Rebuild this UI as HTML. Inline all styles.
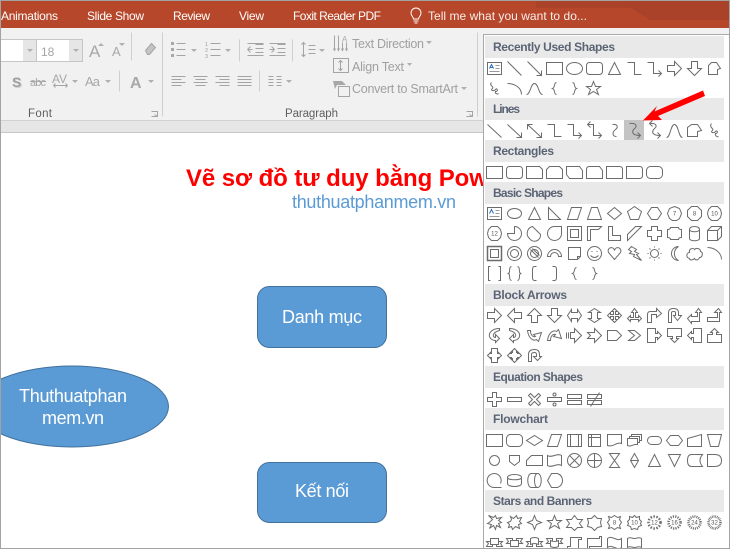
<!DOCTYPE html>
<html><head><meta charset="utf-8"><title>PowerPoint shapes</title>
<style>
html,body{margin:0;padding:0;background:#fff;width:730px;height:549px;overflow:hidden}
svg{display:block}
text{font-family:"Liberation Sans",sans-serif}
.t{fill:#fff;font-size:12px}
.r{fill:#a0a0a0;font-size:12.500px}
.l{fill:#5f5f5f;font-size:11.500px}
.h{fill:#5b6475;font-size:12px;font-weight:bold}
.w{fill:#fff;font-size:18px}
.i path,.i rect,.i circle,.i ellipse,.i line{fill:none;stroke:#a4a4a4;stroke-width:1}
.c{fill:#b0b0b0}
.s path,.s rect,.s circle,.s ellipse{fill:none;stroke:#6c6c6c;stroke-width:1}
.s text{font-size:6px;fill:#555;text-anchor:middle}
</style></head><body>
<svg width="730" height="549" viewBox="0 0 730 549" xmlns="http://www.w3.org/2000/svg">
<rect width="730" height="549" fill="#fff"/>
<!-- canvas -->
<text x="186" y="186" font-size="24" font-weight="bold" fill="#f00" textLength="384" lengthAdjust="spacing">Vẽ sơ đồ tư duy bằng PowerPoint</text>
<text x="292" y="208" font-size="18" fill="#5b9bd5" textLength="164">thuthuatphanmem.vn</text>
<rect x="257.500" y="286.500" width="129" height="61" rx="12" fill="#5b9bd5" stroke="#41719c"/>
<rect x="257.500" y="462.500" width="129" height="60" rx="12" fill="#5b9bd5" stroke="#41719c"/>
<ellipse cx="72" cy="406.500" rx="96.500" ry="40.500" fill="#5b9bd5" stroke="#41719c"/>
<text class="w" x="282" y="323" textLength="80">Danh mục</text>
<text class="w" x="295" y="497" textLength="54">Kết nối</text>
<text class="w" x="19" y="402" textLength="108">Thuthuatphan</text>
<text class="w" x="42" y="424" textLength="62">mem.vn</text>
<!-- ribbon -->
<rect y="0" width="730" height="28" fill="#b7472a"/>
<path d="M536 1H730V8H536Z" fill="#ab432a"/>
<path d="M620 1H730V20H650Z" fill="#a94229"/>
<rect y="0" width="730" height="1" fill="#a3a3a3"/>
<rect y="28" width="730" height="93" fill="#f1f1f1"/>
<rect y="120" width="730" height="1" fill="#d2d2d2"/>
<rect y="121" width="730" height="11" fill="#e6e6e6"/>
<rect y="132" width="730" height="1" fill="#c6c6c6"/>
<text class="t" x="1" y="20" textLength="57">Animations</text>
<text class="t" x="87" y="20" textLength="57">Slide Show</text>
<text class="t" x="173" y="20" textLength="37">Review</text>
<text class="t" x="239" y="20" textLength="25">View</text>
<text class="t" x="293" y="20" textLength="88">Foxit Reader PDF</text>
<text class="t" x="428" y="20" textLength="159" fill-opacity=".9">Tell me what you want to do...</text>
<path d="M413 21h5M414 23h3M413 19c0-2-2.500-3-2.500-6a5 5 0 0 1 10 0c0 3-2.500 4-2.500 6z" fill="none" stroke="#fff" transform="translate(.5 0)"/>
<!-- font boxes -->
<rect x="0" y="39.500" width="82.500" height="22" fill="#fff" stroke="#c6c6c6"/>
<rect x="23" y="40" width="13" height="21" fill="#e6e6e6"/>
<rect x="36" y="40" width="1" height="21" fill="#c6c6c6"/>
<rect x="69" y="40" width="13" height="21" fill="#e6e6e6"/>
<text x="41" y="56" font-size="12" fill="#a5a5a5">18</text>
<path class="c" d="M27 49h6l-3 3zM73 49h6l-3 3zM191 49h6l-3 3zM225 49h6l-3 3zM319 49h6l-3 3zM426 41h6l-3 3zM407 63h5l-2.500 3zM461 87h6l-3 3zM72 80h6l-3 3zM105 80h6l-3 3zM148 80h6l-3 3zM286 80h6l-3 3z"/>
<text x="89" y="57" font-size="17" fill="#a8a8a8">A</text>
<text x="112" y="56" font-size="13" fill="#a8a8a8">A</text>
<path class="c" d="M98 46h6l-3-3zM119 43h6l-3 3z"/>
<text x="13" y="88" font-size="14" font-weight="bold" fill="#d0d0d0">S</text>
<text x="12" y="87" font-size="14" font-weight="bold" fill="#a0a0a0">S</text>
<text x="30" y="86" font-size="11" fill="#a8a8a8" textLength="16">abc</text>
<rect x="30" y="81" width="16" height="1" fill="#a8a8a8"/>
<text x="52" y="83" font-size="12" fill="#a8a8a8" textLength="15">AV</text>
<text x="85" y="86" font-size="13" fill="#a8a8a8" textLength="15">Aa</text>
<text x="130" y="88" font-size="16" font-weight="bold" fill="#a8a8a8" textLength="11">A</text>
<text class="l" x="28" y="117" textLength="24">Font</text>
<text class="l" x="285" y="117" textLength="53">Paragraph</text>
<text class="r" x="352" y="48" textLength="72">Text Direction</text>
<text class="r" x="352" y="71" textLength="52">Align Text</text>
<text class="r" x="352" y="93" textLength="106">Convert to SmartArt</text>
<g fill="#a8a8a8">
<rect x="171" y="42" width="3" height="3"/><rect x="171" y="48" width="3" height="3"/><rect x="171" y="54" width="3" height="3"/>
<path d="M333 81H342L346 85H337L335 89Z"/>
</g>
<text x="205" y="46" font-size="5.500" fill="#a0a0a0">1</text>
<text x="205" y="52" font-size="5.500" fill="#a0a0a0">2</text>
<text x="205" y="58" font-size="5.500" fill="#a0a0a0">3</text>
<g transform="translate(.5 .5)" class="i">
<path d="M131 32V60M162 32V116M119 70V91M239 39V61M292 39V61M259 70V91M477 32V116" style="stroke:#cfcfcf"/>
<path d="M53 85H67M53 85l2-2M53 85l2 2M67 85l-2-2M67 85l-2 2"/>
<path d="M145 50l6-7 4 4-6 7h-2z" style="fill:#c4c4c4"/>
<path d="M151 111h6v5h-6M154 114l3 2"/>
<path d="M466 111h6v5h-6M469 114l3 2"/>
<path d="M176 43h9M176 49h9M176 55h9"/>
<path d="M210 43h10M210 49h10M210 55h10"/>
<path d="M171 76h14M171 79h10M171 82h14M171 85h10M193 76h14M195 79h10M193 82h14M195 85h10M215 76h14M219 79h10M215 82h14M219 85h10M237 76h14M237 79h14M237 82h14M237 85h14"/>
<path d="M268 76h5M268 79h5M268 82h5M268 85h5M276 76h5M276 79h5M276 82h5M276 85h5"/>
<path d="M247 49h5M247 49l3-3M247 49l3 3M255 44h8M255 48h8M255 52h8M247 55h16M247 43h16"/>
<path d="M269 49h5M274 49l-3-3M274 49l-3 3M277 44h8M277 48h8M277 52h8M269 55h16M269 43h16"/>
<path d="M303 42v14M301 44l2-2 2 2M301 54l2 2 2-2M308 45h7M308 49h7M308 53h7"/>
<path d="M334 35v15M338 35v15M342 42v8M346 42v8M333 48l1 2 1-2M337 48l1 2 1-2M341 48l1 2 1-2M345 48l1 2 1-2"/>
<rect x="333" y="58" width="15" height="14"/>
<path d="M340 60v10M338 62l2-2 2 2M338 68l2 2 2-2"/>
<rect x="338" y="86" width="11" height="10"/>
</g>
<text x="342" y="42" font-size="8" fill="#a8a8a8">A</text>
<!-- gallery panel -->
<rect x="483.500" y="34.500" width="246" height="514" fill="#fff" stroke="#a8a8a8"/>
<g fill="#e9e9e9">
<rect x="485" y="36" width="239" height="22"/>
<rect x="485" y="98" width="239" height="22"/>
<rect x="485" y="140" width="239" height="22"/>
<rect x="485" y="182" width="239" height="22"/>
<rect x="485" y="284" width="239" height="22"/>
<rect x="485" y="366" width="239" height="22"/>
<rect x="485" y="408" width="239" height="22"/>
<rect x="485" y="490" width="239" height="22"/>
</g>
<rect x="624" y="120" width="20" height="20" fill="#c4c4c4"/>
<text class="h" x="493" y="51" textLength="122">Recently Used Shapes</text>
<text class="h" x="493" y="113" textLength="27">Lines</text>
<text class="h" x="493" y="155" textLength="61">Rectangles</text>
<text class="h" x="493" y="197" textLength="70">Basic Shapes</text>
<text class="h" x="493" y="299" textLength="74">Block Arrows</text>
<text class="h" x="493" y="381" textLength="90">Equation Shapes</text>
<text class="h" x="493" y="423" textLength="55">Flowchart</text>
<text class="h" x="493" y="505" textLength="99">Stars and Banners</text>
<svg x="0" y="0" width="730" height="548">
<g class="s" transform="translate(.5 .5)">
<!-- recent -->
<g transform="translate(494 68)"><path d="M-7-6H7V6H-7Z"/><path d="M1-3H5M1 0H5M-5 3H5" style="stroke:#999"/><path d="M-5 0L-3-4L-1 0M-4-1H-2" style="stroke:#2a6ebb"/></g>
<path transform="translate(514 68)" d="M-7-7L7 7"/>
<path transform="translate(534 68)" d="M-7-7L7 7M7 2V7H2"/>
<rect x="546" y="62" width="16" height="12"/>
<ellipse cx="574" cy="68" rx="8" ry="6"/>
<rect x="586" y="62" width="16" height="12" rx="3"/>
<path transform="translate(614 68)" d="M0-6L6 6H-6Z"/>
<path transform="translate(634 68)" d="M-7-6H0V6H7"/>
<path transform="translate(654 68)" d="M-7-6H-1V5H7M4 2L7 5L4 8"/>
<path transform="translate(674 68)" d="M-7-3H0V-7L7 0L0 7V3H-7Z"/>
<path transform="translate(694 68)" d="M-3-7H3V0H7L0 7L-7 0H-3Z"/>
<path transform="translate(714 68)" d="M-6-3L-3-6H2L6 0L3 1V6H-6Z"/>
<path transform="translate(494 88)" d="M-3-6C-6-3 0-2-2 0C-5 2 0 3 1 1C3-1 4 3 1 3C0 5 3 6 4 5"/>
<path transform="translate(514 88)" d="M-7-5C0-5 7-1 7 6"/>
<path transform="translate(534 88)" d="M-8 6C-4 6-4-5 0-5C4-5 4 6 8 6"/>
<path transform="translate(554 88)" d="M2-6C-1-6 1-1-2 0C1 1-1 6 2 6"/>
<path transform="translate(574 88)" d="M-2-6C1-6-1-1 2 0C-1 1 1 6-2 6"/>
<path transform="translate(593 88)" d="M0-7L2-2H7L3 1L5 6L0 3L-5 6L-3 1L-7-2H-2Z"/>
<!-- lines -->
<path transform="translate(494 130)" d="M-7-6L7 7"/>
<path transform="translate(514 130)" d="M-7-6L7 7M7 2V7H2"/>
<path transform="translate(534 130)" d="M-7-6L7 7M7 2V7H2M-7-1V-6H-2"/>
<path transform="translate(554 130)" d="M-7-6H0V6H7"/>
<path transform="translate(574 130)" d="M-7-6H-1V5H7M4 2L7 5L4 8"/>
<path transform="translate(594 130)" d="M-7-6H-1V5H7M-4-9L-7-6L-4-3M4 2L7 5L4 8"/>
<path transform="translate(614 130)" d="M-2-6C3-7 4-3 1-1C-2 1-3 6 2 6"/>
<path transform="translate(634 130)" d="M-5-7C2-8 3-4 0-2C-3 1-3 5 6 5M3 2L6 5L3 8"/>
<path transform="translate(654 130)" d="M-5-7C2-8 3-4 0-2C-3 1-3 5 6 5M3 2L6 5L3 8M-2-10L-5-7L-2-4"/>
<path transform="translate(674 130)" d="M-8 7C-4 7-4-6 0-6C4-6 4 7 8 7"/>
<path transform="translate(694 130)" d="M-7 6V-3L-3-6H3L7 0L3 1V6Z"/>
<path transform="translate(714 130)" d="M-3-7C-6-3 0-2-2 0C-5 2 0 3 1 1C3-1 4 3 1 3C0 5 3 7 4 6"/>
<!-- rectangles -->
<rect x="486" y="166" width="16" height="12"/>
<rect x="506" y="166" width="16" height="12" rx="3"/>
<path d="M526 166H539L542 169V178H526Z"/>
<path d="M549 166H559L562 169V178H546V169Z"/>
<path d="M566 166H579L582 170V178H569L566 174Z"/>
<path d="M589 166H599L602 170V178H586V169Q586 166 589 166Z"/>
<path d="M606 166H619Q622 166 622 169V178H606Z"/>
<path d="M626 166H639Q642 166 642 169V175Q642 178 639 178H626Z"/>
<rect x="646" y="166" width="16" height="12" rx="4"/>
<!-- basic 1 -->
<g transform="translate(494 213)"><path d="M-7-6H7V6H-7Z"/><path d="M1-3H5M1 0H5M-5 3H5" style="stroke:#999"/><path d="M-5 0L-3-4L-1 0" style="stroke:#2a6ebb"/></g>
<ellipse cx="514" cy="213" rx="7" ry="5"/>
<path transform="translate(534 213)" d="M0-6L6 6H-6Z"/>
<path transform="translate(554 213)" d="M-6-6L6 6H-6Z"/>
<path transform="translate(574 213)" d="M-3-6H7L3 6H-7Z"/>
<path transform="translate(594 213)" d="M-3-6H3L7 6H-7Z"/>
<path transform="translate(614 213)" d="M0-6L7 0L0 6L-7 0Z"/>
<path transform="translate(634 213)" d="M0-7L7-2L4 6H-4L-7-2Z"/>
<path transform="translate(654 213)" d="M-3-6H3L7 0L3 6H-3L-7 0Z"/>
<g transform="translate(674 213)"><path d="M0-7L5-5L7 0L5 5L2 7H-2L-5 5L-7 0L-5-5Z"/><text y="2">7</text></g>
<g transform="translate(694 213)"><path d="M-3-7H3L7-3V3L3 7H-3L-7 3V-3Z"/><text y="2">8</text></g>
<g transform="translate(714 213)"><path d="M-3-7H3L6-4L7 0L6 4L3 7H-3L-6 4L-7 0L-6-4Z"/><text y="2">10</text></g>
<!-- basic 2 -->
<g transform="translate(494 233)"><path d="M-3-7H3L6-4L7 0L6 4L3 7H-3L-6 4L-7 0L-6-4Z"/><text y="2">12</text></g>
<path transform="translate(514 233)" d="M0 0V-7A7 7 0 1 1 -7 0Z"/>
<path transform="translate(534 233)" d="M-2-7L6 1A6 6 0 0 1-5 5A7 7 0 0 1-2-7Z"/>
<path transform="translate(554 233)" d="M7-7V0A7 7 0 1 1 0-7Z"/>
<g transform="translate(574 233)"><path d="M-7-7H7V7H-7Z"/><path d="M-4-4H4V4H-4Z"/></g>
<path transform="translate(594 233)" d="M-7-7H7L4-4H-4V7H-7Z"/>
<path transform="translate(614 233)" d="M-6-7H-2V2H6V7H-6Z"/>
<path transform="translate(634 233)" d="M-7 1L1-7H7L-7 7Z"/>
<path transform="translate(654 233)" d="M-3-7H3V-3H7V3H3V7H-3V3H-7V-3H-3Z"/>
<path transform="translate(674 233)" d="M-4-6H4Q4-4 7-4V4Q4 4 4 6H-4Q-4 4-7 4V-4Q-4-4-4-6Z"/>
<g transform="translate(694 233)"><path d="M-5-4V5C-5 8 5 8 5 5V-4C5-8-5-8-5-4C-5-1 5-1 5-4"/></g>
<path transform="translate(714 233)" d="M-7-3L-3-7H7V3L3 7H-7ZM-7-3H3V7M3-3L7-7"/>
<!-- basic 3 -->
<g transform="translate(494 253)"><path d="M-7-7H7V7H-7Z" style="stroke-width:1.500"/><path d="M-4-4H4V4H-4Z"/></g>
<g transform="translate(514 253)"><circle r="7"/><circle r="4"/></g>
<g transform="translate(534 253)"><circle r="7"/><circle r="4"/><path d="M-4-4L4 4M-2-5L5 2"/></g>
<path transform="translate(554 253)" d="M-7 3A7 7 0 0 1 7 3L4 3A4 4 0 0 0-4 3Z"/>
<path transform="translate(574 253)" d="M-6-6H6V3L3 6H-6ZM3 6L3 3H6"/>
<g transform="translate(594 253)"><circle r="7"/><path d="M-4 2Q0 6 4 2M-3-2h1M2-2h1"/></g>
<path transform="translate(614 253)" d="M0 6L-6-1C-8-6-1-8 0-3C1-8 8-6 6-1Z"/>
<path transform="translate(634 253)" d="M-3-7L2-4L0-2L4 0L2 1L7 7L-1 3L0 1L-5 0L-3-2L-6-4Z"/>
<g transform="translate(654 253)"><circle r="4"/><path d="M0-7V-6M0 6V7M-7 0H-6M6 0H7M-5-5L-4-4M4 4L5 5M-5 5L-4 4M4-4L5-5"/></g>
<path transform="translate(674 253)" d="M4-7A8 8 0 0 0 4 7A6 6 0 0 1 4-7Z"/>
<path transform="translate(694 253)" d="M-5 5C-9 4-8-1-5-1C-6-5-1-6 0-4C2-6 6-5 6-2C9-1 8 4 5 4C4 7 1 7 0 5C-2 7-5 7-5 5Z"/>
<path transform="translate(714 253)" d="M-7-6C0-6 7-1 7 6"/>
<!-- basic 4 -->
<path transform="translate(494 273)" d="M-4-7H-6V7H-4M4-7H6V7H4"/>
<path transform="translate(514 273)" d="M-3-7Q-5-7-5-2Q-5 0-7 0Q-5 0-5 2Q-5 7-3 7M3-7Q5-7 5-2Q5 0 7 0Q5 0 5 2Q5 7 3 7"/>
<path transform="translate(534 273)" d="M2-7H0Q-2-7-2-4V4Q-2 7 0 7H2"/>
<path transform="translate(554 273)" d="M-2-7H0Q2-7 2-4V4Q2 7 0 7H-2"/>
<path transform="translate(574 273)" d="M2-6C-1-6 1-1-2 0C1 1-1 6 2 6"/>
<path transform="translate(594 273)" d="M-2-6C1-6-1-1 2 0C-1 1 1 6-2 6"/>
<!-- block 1 -->
<path transform="translate(494 315)" d="M-7-3H0V-7L7 0L0 7V3H-7Z"/>
<path transform="translate(514 315)" d="M7-3H0V-7L-7 0L0 7V3H7Z"/>
<path transform="translate(534 315)" d="M-3 7V0H-7L0-7L7 0H3V7Z"/>
<path transform="translate(554 315)" d="M-3-7V0H-7L0 7L7 0H3V-7Z"/>
<path transform="translate(574 315)" d="M-7 0L-3-6V-3H3V-6L7 0L3 6V3H-3V6Z"/>
<path transform="translate(594 315)" d="M0-7L6-3H3V3H6L0 7L-6 3H-3V-3H-6Z"/>
<path transform="translate(614 315)" d="M0-7L3-4H1V-1H4V-3L7 0L4 3V1H1V4H3L0 7L-3 4H-1V1H-4V3L-7 0L-4-3V-1H-1V-4H-3Z"/>
<path transform="translate(634 315)" d="M0-7L3-3H1V2H4V0L7 3L4 6V4H-4V6L-7 3L-4 0V2H-1V-3H-3Z"/>
<path transform="translate(654 315)" d="M-7 7V-1Q-7-4-4-4H2V-7L7-2L2 2V-1H-3V7Z"/>
<path transform="translate(674 315)" d="M-6 7V-3Q-6-7-1-7Q4-7 4-3V0H7L3 5L-1 0H1V-3Q1-4-1-4Q-3-4-3-3V7Z"/>
<path transform="translate(694 315)" d="M-7 3L-3-1V1H3V-3H1L4-7L7-3H5V6H-3V8L-7 3Z"/>
<path transform="translate(714 315)" d="M-7 2H3V-3H0L4-7L7-3H5V6H-7Z"/>
<!-- block 2 -->
<path transform="translate(494 335)" d="M5-7C-2-7-6-3-5 1C-4 4-1 5 1 5V7L5 3L1-1V2C-2 2-3-3 5-5Z"/>
<path transform="translate(514 335)" d="M-5-7C2-7 6-3 5 1C4 4 1 5-1 5V7L-5 3L-1-1V2C2 2 3-3-5-5Z"/>
<path transform="translate(534 335)" d="M-7-5C-6 3-1 6 2 4L4 6L7-3L-1-1L1 1C-2 2-4-1-4-5Z"/>
<path transform="translate(554 335)" d="M-7 5C-6-3-1-6 2-4L4-6L7 3L-1 1L1-1C-2-2-4 1-4 5Z"/>
<path transform="translate(574 335)" d="M-8-3V3M-6-3V3M-4-3H0V-7L7 0L0 7V3H-4Z"/>
<path transform="translate(594 335)" d="M-7-3H0V-7L7 0L0 7V3H-7L-4 0Z"/>
<path transform="translate(614 335)" d="M-7-5H2L7 0L2 5H-7Z"/>
<path transform="translate(634 335)" d="M-6-5H0L6 0L0 5H-6L0 0Z"/>
<path transform="translate(654 335)" d="M-7-7H1V-2H3V-4L7 0L3 4V2H1V7H-7Z"/>
<path transform="translate(674 335)" d="M-7-7H7V1H2V3H4L0 7L-4 3H-2V1H-7Z"/>
<path transform="translate(694 335)" d="M7-7H-1V-2H-3V-4L-7 0L-3 4V2H-1V7H7Z"/>
<path transform="translate(714 335)" d="M-7 7H7V-1H2V-3H4L0-7L-4-3H-2V-1H-7Z"/>
<!-- block 3 -->
<path transform="translate(494 355)" d="M-3-7H3V-2H4V-3L7 0L4 3V2H3V7H-3V2H-4V3L-7 0L-4-3V-2H-3Z"/>
<path transform="translate(514 355)" d="M0-7L3-4H2V-3H3V-2H4V-3L7 0L4 3V2H3V3H2V4H3L0 7L-3 4H-2V3H-3V2H-4V3L-7 0L-4-3V-2H-3V-3H-2V-4H-3Z"/>
<path transform="translate(534 355)" d="M-6 6V-1Q-6-6 0-6Q5-6 5-1V1H7L3 5L-1 1H2V-1Q2-3 0-3Q-3-3-3-1V6Z"/>
<!-- equation -->
<path transform="translate(494 399)" d="M-2-7H2V-2H7V2H2V7H-2V2H-7V-2H-2Z"/>
<rect x="507" y="397" width="14" height="4"/>
<path transform="translate(534 399)" d="M-4-6L0-2L4-6L6-4L2 0L6 4L4 6L0 2L-4 6L-6 4L-2 0L-6-4Z"/>
<g transform="translate(554 399)"><rect x="-7" y="-2" width="14" height="4"/><circle cy="-5" r="1.500"/><circle cy="5" r="1.500"/></g>
<g transform="translate(574 399)"><rect x="-7" y="-5" width="14" height="4"/><rect x="-7" y="1" width="14" height="4"/></g>
<g transform="translate(594 399)"><rect x="-7" y="-5" width="14" height="4"/><rect x="-7" y="1" width="14" height="4"/><path d="M-4 7L5-7"/></g>
<!-- flow 1 -->
<rect x="486" y="434" width="16" height="12"/>
<rect x="506" y="434" width="16" height="12" rx="4"/>
<path transform="translate(534 440)" d="M0-5L8 0L0 5L-8 0Z"/>
<path transform="translate(554 440)" d="M-3-6H7L3 6H-7Z"/>
<g transform="translate(574 440)"><rect x="-7" y="-6" width="14" height="12"/><path d="M-4-6V6M4-6V6"/></g>
<g transform="translate(594 440)"><rect x="-6" y="-6" width="12" height="12"/><path d="M-3-6V6M-6-3H6"/></g>
<path transform="translate(614 440)" d="M-7-6H7V3C2 1-1 7-7 5Z"/>
<path transform="translate(634 440)" d="M-7-2H3V4C-1 3-3 7-7 5ZM-5-2V-4H5V2H3M-3-4V-6H7V0H5"/>
<rect x="647" y="436" width="14" height="8" rx="4"/>
<path transform="translate(674 440)" d="M-4-5H4L8 0L4 5H-4L-8 0Z"/>
<path transform="translate(694 440)" d="M-7-2L7-6V6H-7Z"/>
<path transform="translate(714 440)" d="M-7-6H7L4 6H-4Z"/>
<!-- flow 2 -->
<circle cx="494" cy="460" r="5"/>
<path transform="translate(514 460)" d="M-5-5H5V1L0 5L-5 1Z"/>
<path transform="translate(534 460)" d="M-3-5H8V5H-8V0Z"/>
<path transform="translate(554 460)" d="M-7-5C-3-2 3-8 7-5V5C3 2-3 8-7 5Z"/>
<g transform="translate(574 460)"><circle r="7"/><path d="M-5-5L5 5M-5 5L5-5"/></g>
<g transform="translate(594 460)"><circle r="7"/><path d="M-7 0H7M0-7V7"/></g>
<path transform="translate(614 460)" d="M-5-7H5L-5 7H5Z"/>
<path transform="translate(634 460)" d="M0-7L4 0L0 7L-4 0ZM-4 0H4"/>
<path transform="translate(654 460)" d="M0-6L6 6H-6Z"/>
<path transform="translate(674 460)" d="M-6-6H6L0 6Z"/>
<path transform="translate(694 460)" d="M-3-6H8Q3 0 8 6H-3Q-7 6-7 0Q-7-6-3-6Z"/>
<path transform="translate(714 460)" d="M-7-6H0Q7-6 7 0Q7 6 0 6H-7Z"/>
<!-- flow 3 -->
<path transform="translate(494 480)" d="M7 7H0A7 7 0 1 1 6 3"/>
<g transform="translate(514 480)"><path d="M-7-3V3C-7 7 7 7 7 3V-3C7-7-7-7-7-3C-7 0 7 0 7-3"/></g>
<g transform="translate(534 480)"><path d="M-3-7H3C8-7 8 7 3 7H-3C-8 7-8-7-3-7Z"/><path d="M3-7C-1-7-1 7 3 7"/></g>
<path transform="translate(554 480)" d="M-3-7H3Q8-5 8 0Q8 5 3 7H-3L-7 0Z"/>
<!-- stars -->
<path transform="translate(494 522)" d="M-2-3L-6-7L-1-5L1-7L2-4L7-5L4-2L7 0L4 1L6 5L2 3L1 7L-1 3L-5 6L-3 2L-7 1L-4-1Z"/>
<path transform="translate(514 522)" d="M-3-3L-4-6L-1-4L2-7L3-4L7-5L5-1L7 1L4 2L5 6L1 4L-2 7L-3 4L-6 5L-5 2L-7 0L-4-1Z"/>
<path transform="translate(534 522)" d="M0-7L2-2L7 0L2 2L0 7L-2 2L-7 0L-2-2Z"/>
<path transform="translate(554 522)" d="M0-7L2-2H7L3 1L5 6L0 3L-5 6L-3 1L-7-2H-2Z"/>
<path transform="translate(574 522)" d="M0-7L3-3H8L5 1L8 5H3L0 8L-3 5H-8L-5 1L-8-3H-3Z"/>
<path transform="translate(594 522)" d="M0-7L3-4L7-4L6 0L7 4L3 5L0 8L-3 5L-7 4L-6 0L-7-4L-3-4Z"/>
<g transform="translate(614 522)"><path d="M0-7L3-5L6-6L5-3L7 0L5 3L6 6L3 5L0 7L-3 5L-6 6L-5 3L-7 0L-5-3L-6-6L-3-5Z"/><text y="2">8</text></g>
<g transform="translate(634 522)"><path d="M0-7L2-5L5-6L5-3L7-1L6 1L7 3L4 4L3 7L0 6L-3 7L-4 4L-7 3L-6 1L-7-1L-5-3L-5-6L-2-5Z"/><text y="2">10</text></g>
<g transform="translate(654 522)"><circle r="6" style="stroke-width:2.500;stroke-dasharray:1.500 1.500"/><text y="2">12</text></g>
<g transform="translate(674 522)"><circle r="6" style="stroke-width:2.500;stroke-dasharray:1.200 1.200"/><text y="2">16</text></g>
<g transform="translate(694 522)"><circle r="6" style="stroke-width:2.500;stroke-dasharray:1 1"/><text y="2">24</text></g>
<g transform="translate(714 522)"><circle r="6" style="stroke-width:2.500;stroke-dasharray:.8 .8"/><text y="2">32</text></g>
<!-- banners -->
<path transform="translate(494 542)" d="M-4-4H4V2H-4ZM-4-1H-8L-6 1L-8 4H-2V2M4-1H8L6 1L8 4H2V2"/>
<path transform="translate(514 542)" d="M-4-2H4V4H-4ZM-4 1H-8L-6-1L-8-4H-2V-2M4 1H8L6-1L8-4H2V-2"/>
<path transform="translate(534 542)" d="M-4-4Q0-6 4-4V2Q0 0-4 2ZM-4-1H-8L-6 1L-8 4H-2V1M4-1H8L6 1L8 4H2V1"/>
<path transform="translate(554 542)" d="M-4-2Q0 0 4-2V4Q0 6-4 4ZM-4 1H-8L-6-1L-8-4H-2V-1M4 1H8L6-1L8-4H2V-1"/>
<path transform="translate(574 542)" d="M-4-5H7V-3H4V6H-7V4H-4ZM-4-5V-3"/>
<path transform="translate(594 542)" d="M-7-4H5V-6H7V4H-5V6H-7Z"/>
<path transform="translate(614 542)" d="M-7-4C-3-8 3 0 7-4V5C3 9-3 1-7 5Z"/>
<path transform="translate(634 542)" d="M-7-4C-5-6-2-4 0-4C2-4 5-6 7-4V5C5 3 2 5 0 5C-2 5-5 3-7 5Z"/>
</g>
</svg>
<!-- red arrow -->
<path d="M643 120.500L657 106L654.500 111.500L703 90.500L705 96L658 116L662 120Z" fill="#f00"/>
<!-- frame -->
<rect x="0" y="0" width="1" height="549" fill="#a3a3a3"/>
<rect x="0" y="548" width="730" height="1" fill="#a3a3a3"/>
<rect x="729" y="0" width="1" height="549" fill="#a3a3a3"/>
</svg>
</body></html>
